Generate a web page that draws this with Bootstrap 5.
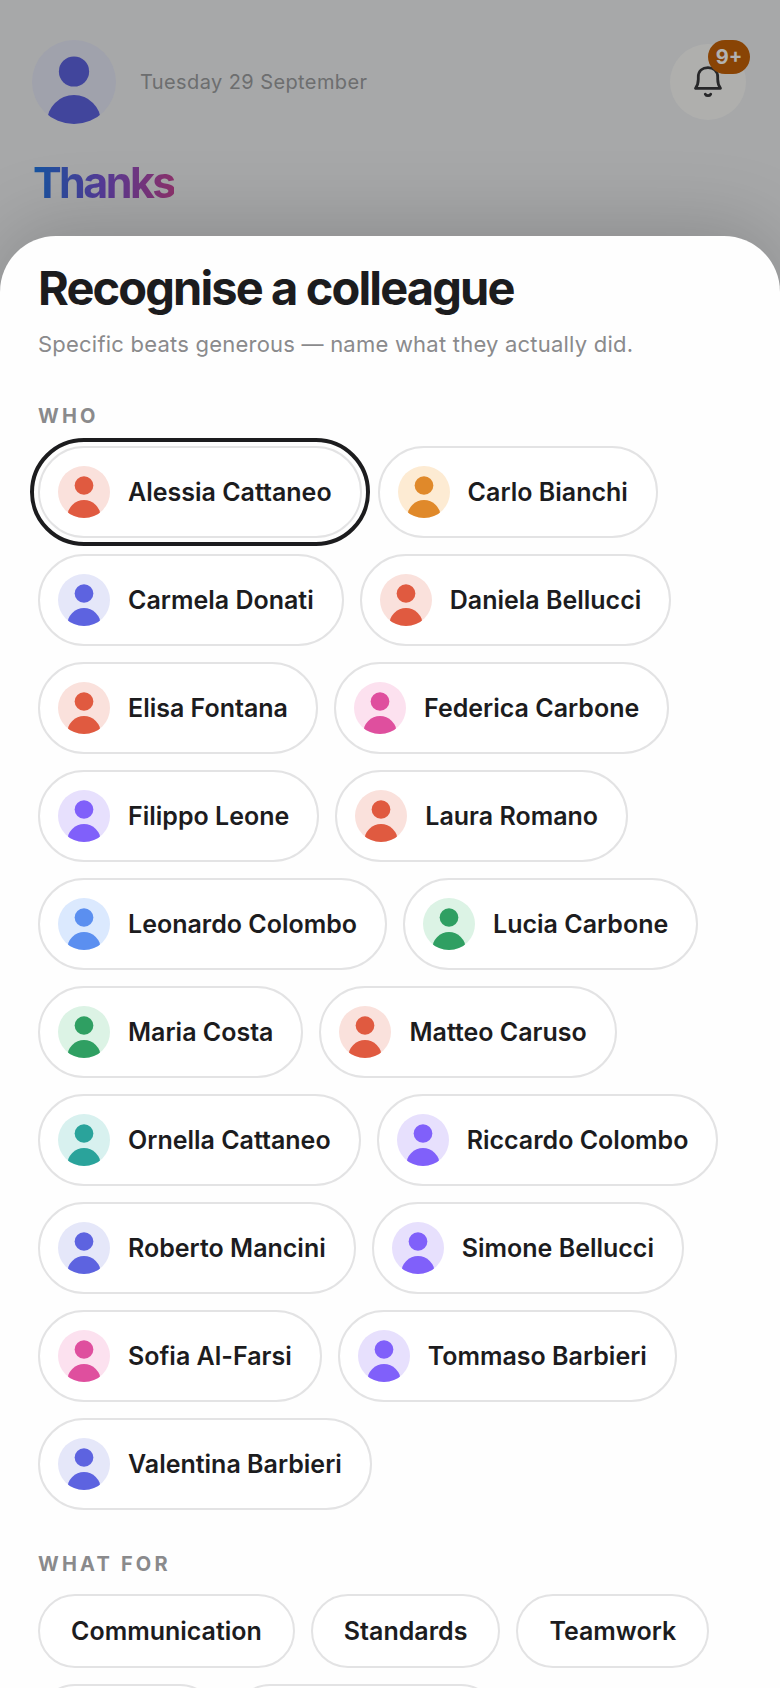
<!DOCTYPE html>
<html lang="en">
<head>
<meta charset="utf-8">
<meta name="viewport" content="width=device-width, initial-scale=1">
<title>Recognise a colleague</title>
<link href="https://cdn.jsdelivr.net/npm/bootstrap@5.3.0/dist/css/bootstrap.min.css" rel="stylesheet">
<style>
  :root { --ink: #1c1c1e; --muted: #8a8a8c; --line: #e3e3e4; }
  body { font-family: Inter, "Liberation Sans", sans-serif; color: var(--ink); background: #eff1f3; }
  .page-top { padding: 40px 34px 28px 32px; }
  .avatar-lg { width: 84px; height: 84px; }
  .avatar-lg.indigo { --tint: #e6e8f6; }
  .today { font-size: 20px; line-height: 28px; letter-spacing: .02em; color: #9c9ea0; }
  .bell-btn { width: 76px; height: 76px; background: #fbfbf8; color: #38393b; }
  .bell-count { top: -4px; right: -4px; min-width: 42px; height: 34px; font-size: 20px; line-height: 34px; background: #c46208; color: #fff; }
  .page-title { margin: 32px 0 0 1px; font-size: 43px; line-height: 52px; letter-spacing: -.06em; background: linear-gradient(90deg, #1f79e6, #7c55d8 50%, #c9489b); -webkit-background-clip: text; background-clip: text; color: transparent; }
  .dimmer { background: rgba(0, 0, 0, .3); }
  .sheet { padding: 22px 38px 0; border-radius: 56px 56px 0 0; background: #fefefe; box-shadow: 0 -8px 80px rgba(0, 0, 0, .18); }
  .sheet-title { margin-bottom: 10px; font-size: 47px; line-height: 60px; letter-spacing: -.04em; }
  .sheet-note { margin-bottom: 44px; font-size: 22px; line-height: 32px; letter-spacing: .01em; color: var(--muted); }
  .group-label { margin-bottom: 18px; font-size: 20px; line-height: 24px; letter-spacing: .16em; color: var(--muted); }
  .choices + .group-label { margin-top: 42px; }
  .choice { --bs-btn-color: var(--ink); --bs-btn-bg: #fff; --bs-btn-border-color: var(--line); --bs-btn-hover-bg: #f6f6f7; --bs-btn-hover-color: var(--ink); --bs-btn-hover-border-color: var(--line);
    border-width: 2px; font-size: 25px; line-height: 34px; font-weight: 600; white-space: nowrap; }
  .person { padding: 18px 28px 18px 18px; gap: 18px; }
  .person svg { width: 52px; height: 52px; }
  .person[aria-pressed="true"] { outline: 4px solid var(--ink); outline-offset: 4px; }
  .topic { padding: 18px 31px; }
  .choices { gap: 16px; }
  .indigo { color: #5d63e0; --tint: #e5e7f9; }
  .coral { color: #e05a40; --tint: #fae1dc; }
  .amber { color: #e0892a; --tint: #fdebd3; }
  .pink { color: #df4f9e; --tint: #fce1ef; }
  .violet { color: #8060fa; --tint: #e7e0fd; }
  .blue { color: #5b8ff0; --tint: #dbe9fe; }
  .green { color: #2f9f62; --tint: #dcf3e5; }
  .teal { color: #2aa39b; --tint: #d8f1ef; }
</style>
</head>
<body class="vh-100 overflow-hidden">
<svg class="position-absolute" width="0" height="0" aria-hidden="true">
  <clipPath id="disc"><circle cx="50" cy="50" r="50"/></clipPath>
  <symbol id="face" viewBox="0 0 100 100">
    <circle cx="50" cy="50" r="50" style="fill:var(--tint)"/>
    <g clip-path="url(#disc)" fill="currentColor"><circle cx="50" cy="37.5" r="18"/><circle cx="50" cy="97.500" r="32"/></g>
  </symbol>
</svg>
<div class="position-relative h-100 d-flex flex-column">
  <header class="page-top">
    <div class="d-flex align-items-center">
      <svg class="avatar-lg indigo flex-shrink-0" role="img" aria-label="Your profile"><use href="#face"/></svg>
      <span class="today ms-4">Tuesday 29 September</span>
      <button type="button" class="bell-btn btn rounded-circle border-0 p-0 ms-auto position-relative d-flex align-items-center justify-content-center" aria-label="Notifications">
        <svg width="32" height="36" viewBox="0 0 32 36" fill="none" stroke="currentColor" stroke-width="2.800" stroke-linejoin="round" stroke-linecap="round"><path d="M3.500 24.300h25c-2.200-3-2.800-5-2.800-9V13C25.700 7 21.500 3.600 16 3.600S6.300 7 6.300 13v2.300c0 4-.6 6-2.800 9z"/><path d="M13.300 30.200c1.200 2 4.200 2 5.400 0"/></svg>
        <span class="bell-count position-absolute rounded-pill fw-bold text-center">9+</span>
      </button>
    </div>
    <h1 class="page-title fw-bold d-table">Thanks</h1>
  </header>
  <div class="dimmer position-absolute top-0 start-0 w-100 h-100"></div>
  <main class="sheet position-relative flex-grow-1 overflow-hidden" role="dialog" aria-labelledby="sheet-title">
    <h2 id="sheet-title" class="sheet-title fw-bold">Recognise a colleague</h2>
    <p class="sheet-note">Specific beats generous — name what they actually did.</p>
    <h3 class="group-label fw-bold text-uppercase">Who</h3>
    <div class="choices d-flex flex-wrap">
      <button type="button" class="choice person btn rounded-pill d-flex align-items-center" aria-pressed="true"><svg class="coral"><use href="#face"/></svg>Alessia Cattaneo</button>
      <button type="button" class="choice person btn rounded-pill d-flex align-items-center"><svg class="amber"><use href="#face"/></svg>Carlo Bianchi</button>
      <button type="button" class="choice person btn rounded-pill d-flex align-items-center"><svg class="indigo"><use href="#face"/></svg>Carmela Donati</button>
      <button type="button" class="choice person btn rounded-pill d-flex align-items-center"><svg class="coral"><use href="#face"/></svg>Daniela Bellucci</button>
      <button type="button" class="choice person btn rounded-pill d-flex align-items-center"><svg class="coral"><use href="#face"/></svg>Elisa Fontana</button>
      <button type="button" class="choice person btn rounded-pill d-flex align-items-center"><svg class="pink"><use href="#face"/></svg>Federica Carbone</button>
      <button type="button" class="choice person btn rounded-pill d-flex align-items-center"><svg class="violet"><use href="#face"/></svg>Filippo Leone</button>
      <button type="button" class="choice person btn rounded-pill d-flex align-items-center"><svg class="coral"><use href="#face"/></svg>Laura Romano</button>
      <button type="button" class="choice person btn rounded-pill d-flex align-items-center"><svg class="blue"><use href="#face"/></svg>Leonardo Colombo</button>
      <button type="button" class="choice person btn rounded-pill d-flex align-items-center"><svg class="green"><use href="#face"/></svg>Lucia Carbone</button>
      <button type="button" class="choice person btn rounded-pill d-flex align-items-center"><svg class="green"><use href="#face"/></svg>Maria Costa</button>
      <button type="button" class="choice person btn rounded-pill d-flex align-items-center"><svg class="coral"><use href="#face"/></svg>Matteo Caruso</button>
      <button type="button" class="choice person btn rounded-pill d-flex align-items-center"><svg class="teal"><use href="#face"/></svg>Ornella Cattaneo</button>
      <button type="button" class="choice person btn rounded-pill d-flex align-items-center"><svg class="violet"><use href="#face"/></svg>Riccardo Colombo</button>
      <button type="button" class="choice person btn rounded-pill d-flex align-items-center"><svg class="indigo"><use href="#face"/></svg>Roberto Mancini</button>
      <button type="button" class="choice person btn rounded-pill d-flex align-items-center"><svg class="violet"><use href="#face"/></svg>Simone Bellucci</button>
      <button type="button" class="choice person btn rounded-pill d-flex align-items-center"><svg class="pink"><use href="#face"/></svg>Sofia Al-Farsi</button>
      <button type="button" class="choice person btn rounded-pill d-flex align-items-center"><svg class="violet"><use href="#face"/></svg>Tommaso Barbieri</button>
      <button type="button" class="choice person btn rounded-pill d-flex align-items-center"><svg class="indigo"><use href="#face"/></svg>Valentina Barbieri</button>
    </div>
    <h3 class="group-label fw-bold text-uppercase">What for</h3>
    <div class="choices d-flex flex-wrap">
      <button type="button" class="choice topic btn rounded-pill">Communication</button>
      <button type="button" class="choice topic btn rounded-pill">Standards</button>
      <button type="button" class="choice topic btn rounded-pill">Teamwork</button>
      <button type="button" class="choice topic btn rounded-pill">Kindness</button>
      <button type="button" class="choice topic btn rounded-pill">Problem-solving</button>
    </div>
  </main>
</div>
<script src="https://cdn.jsdelivr.net/npm/bootstrap@5.3.0/dist/js/bootstrap.bundle.min.js"></script>
</body>
</html>
